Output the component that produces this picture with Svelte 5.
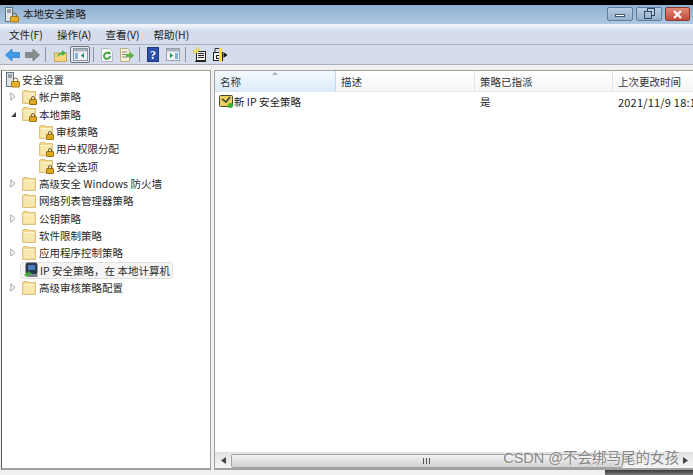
<script lang="ts">
	type Node = { label: string; depth: number; arrow?: 'closed' | 'open'; icon: string; selected?: boolean };

	const tree: Node[] = [
		{ label: '帐户策略', depth: 1, arrow: 'closed', icon: 'lock' },
		{ label: '本地策略', depth: 1, arrow: 'open', icon: 'lock' },
		{ label: '审核策略', depth: 2, icon: 'lock' },
		{ label: '用户权限分配', depth: 2, icon: 'lock' },
		{ label: '安全选项', depth: 2, icon: 'lock' },
		{ label: '高级安全 Windows 防火墙', depth: 1, arrow: 'closed', icon: 'folder' },
		{ label: '网络列表管理器策略', depth: 1, icon: 'folder' },
		{ label: '公钥策略', depth: 1, arrow: 'closed', icon: 'folder' },
		{ label: '软件限制策略', depth: 1, icon: 'folder' },
		{ label: '应用程序控制策略', depth: 1, arrow: 'closed', icon: 'folder' },
		{ label: 'IP 安全策略，在 本地计算机', depth: 1, icon: 'ip', selected: true },
		{ label: '高级审核策略配置', depth: 1, arrow: 'closed', icon: 'folder' }
	];

	const menus = ['文件(F)', '操作(A)', '查看(V)', '帮助(H)'];
</script>

{#snippet server()}
	<svg width="16" height="16" viewBox="0 0 16 16">
		<rect x="1.500" y="0.500" width="7" height="14" fill="#dfe3e8" stroke="#66727f" />
		<path d="M3 3h4M3 5h4" stroke="#4c5a6a" />
		<rect x="6.500" y="9.500" width="8" height="5.500" rx="0.500" fill="#e5b030" stroke="#a87a12" />
		<path d="M8.500 9.500V8a2 2 0 0 1 4 0v1.500" fill="none" stroke="#7a6a40" />
	</svg>
{/snippet}

{#snippet folder(lock: boolean)}
	<svg width="16" height="16" viewBox="0 0 16 16">
		<path d="M.5 3v11.500h13V2.500H7L6 1.500H1.500z" fill="#f3d88c" stroke="#dcc27e" />
		<path d="M1.500 4.500h11v9h-11z" fill="#f9e8ae" />
		<path d="M1.500 4.500h11" stroke="#fff6d8" />
		{#if lock}
			<rect x="7.500" y="10.500" width="7" height="5" rx="0.500" fill="#e0a820" stroke="#9c7210" />
			<path d="M9.500 10.500V9a1.500 1.500 0 0 1 3 0v1.500" fill="none" stroke="#6f6240" />
		{/if}
	</svg>
{/snippet}

{#snippet ipIcon()}
	<svg width="16" height="16" viewBox="0 0 16 16">
		<rect x="3" y="1" width="11" height="11" rx="1.500" fill="#26364c" stroke="#3a434f" />
		<rect x="5" y="3" width="7" height="5" fill="#4f7cc0" />
		<rect x="4.500" y="12" width="10" height="3" fill="#7f858c" />
		<path d="M1 13l4-3 1 1.500-2 3.500z" fill="#35b52e" />
		<path d="M5 9.500l4 3" stroke="#35b52e" stroke-width="1.500" />
	</svg>
{/snippet}

<div class="window">
	<header class="titlebar">
		<span class="title-icon">{@render server()}</span>
		<span class="title">本地安全策略</span>
		<div class="caption">
			<button class="cap" aria-label="最小化"><i class="min"></i></button>
			<button class="cap" aria-label="还原"><i class="restore"></i></button>
			<button class="cap close" aria-label="关闭">
				<svg width="11" height="9" viewBox="0 0 11 9"><path d="M2 1l7 7M9 1L2 8" stroke="#fff" stroke-width="2.200" /></svg>
			</button>
		</div>
	</header>

	<nav class="menubar">
		{#each menus as m}
			<span>{m}</span>
		{/each}
	</nav>

	<div class="toolbar">
		<svg class="back" width="15" height="14" viewBox="0 0 15 14">
			<path d="M.5 7L7 1v3.500h7.500v5H7V13z" fill="#3c9ae6" stroke="#2b78c2" stroke-width="0.700" />
		</svg>
		<svg class="forward" width="15" height="14" viewBox="0 0 15 14">
			<path d="M14.500 7L8 1v3.500H.5v5H8V13z" fill="#8a8d8d" stroke="#6f7272" stroke-width="0.700" />
		</svg>
		<i class="sep"></i>
		<svg class="up" width="13" height="14" viewBox="0 0 13 14">
			<path d="M.5 5h12v8.500H.5z" fill="#f4d67e" stroke="#c9a550" />
			<path d="M3 9.500c1-4 3-5 5-5V2l4 3-4 3V6.500c-2 0-3 1-5 3z" fill="#3fb04a" />
		</svg>
		<span class="pressed">
			<svg width="15" height="13" viewBox="0 0 15 13">
				<rect x="0.500" y="0.500" width="14" height="12" fill="#eef1f5" stroke="#8e959e" />
				<rect x="1" y="1" width="13" height="2.500" fill="#a9b3bf" />
				<rect x="2" y="5" width="3" height="6" fill="#7fb5dd" />
				<path d="M11 5v5L8 7.500z" fill="#1e8a4e" />
			</svg>
		</span>
		<i class="sep near"></i>
		<svg class="tool" width="12" height="14" viewBox="0 0 12 14">
			<path d="M.5.5h8l3 3v10H.5z" fill="#f5f7f8" stroke="#b5bcc0" />
			<path d="M9 8a3 3 0 1 1-1-2.300" fill="none" stroke="#3aa13c" stroke-width="1.800" />
			<path d="M6.500 3.500l3 .5-.5 3z" fill="#3aa13c" />
		</svg>
		<svg class="tool" width="14" height="14" viewBox="0 0 14 14">
			<path d="M.5.5h7l2 2v11H.5z" fill="#f6f0d8" stroke="#b9ad88" />
			<path d="M2 4h5M2 6.500h5M2 9h5" stroke="#8f8a78" />
			<path d="M6 6h3.500V3.500L14 7.500l-4.500 4V9H6z" fill="#59b548" />
		</svg>
		<i class="sep"></i>
		<svg class="tool" width="12" height="15" viewBox="0 0 12 15">
			<rect x="0.500" y="0.500" width="11" height="14" fill="#2c50a8" stroke="#1d3a80" />
			<text x="6" y="12" text-anchor="middle" class="help">?</text>
		</svg>
		<svg class="tool" width="14" height="13" viewBox="0 0 14 13">
			<rect x="0.500" y="0.500" width="13" height="12" fill="#eef1f5" stroke="#9aa1a8" />
			<rect x="1" y="1" width="12" height="2.500" fill="#a9b3bf" />
			<path d="M4 5v5l3-2.500z" fill="#1e8a4e" />
			<rect x="9" y="5" width="3" height="6" fill="#7fb5dd" />
		</svg>
		<i class="sep"></i>
		<svg class="tool" width="14" height="16" viewBox="0 0 14 16">
			<rect x="3.500" y="4.500" width="9" height="9" fill="#f7f7f2" stroke="#222" />
			<path d="M5 6.500h6M5 8.500h6M5 10.500h6M2 14.500h11" stroke="#222" />
			<path d="M3 0l2 5M0 3l5 2M7 1L4 5M0 6l4-1" stroke="#e8d540" stroke-width="1.300" />
		</svg>
		<svg class="last" width="15" height="15" viewBox="0 0 15 15">
			<rect x="0.500" y="5.500" width="9" height="8" fill="#f4f4f0" stroke="#222" />
			<rect x="3.500" y="8.500" width="3" height="3" fill="none" stroke="#222" />
			<rect x="6" y="1" width="3" height="14" fill="#f1e22a" />
			<path d="M2 1.500h4M2 1.500v4" stroke="#333" />
			<path d="M10.500 5l4 3-4 3z" fill="#111" />
		</svg>
	</div>

	<div class="body">
		<aside class="pane left">
			<div class="row root">
				<span class="ico">{@render server()}</span>
				<span class="label">安全设置</span>
			</div>
			{#each tree as node}
				<div class="row" class:indent={node.depth === 2}>
					<span class="arrow">
						{#if node.arrow === 'closed'}
							<svg width="6" height="9" viewBox="0 0 6 9"><path d="M.8.8v7.400L5 4.500z" fill="#fff" stroke="#a6a6a6" /></svg>
						{:else if node.arrow === 'open'}
							<svg width="7" height="7" viewBox="0 0 7 7"><path d="M6 1v5H1z" fill="#404040" /></svg>
						{/if}
					</span>
					<span class="item" class:selected={node.selected}>
						<span class="ico">
							{#if node.icon === 'ip'}
								{@render ipIcon()}
							{:else}
								{@render folder(node.icon === 'lock')}
							{/if}
						</span>
						<span class="label">{node.label}</span>
					</span>
				</div>
			{/each}
		</aside>

		<section class="pane right">
			<div class="thead">
				<div class="th name"><i class="sort"></i>名称</div>
				<div class="th desc">描述</div>
				<div class="th assign">策略已指派</div>
				<div class="th time">上次更改时间</div>
			</div>
			<div class="trow">
				<div class="td name">
					<svg width="15" height="15" viewBox="0 0 15 15">
						<rect x="0.500" y="1.500" width="13" height="11" rx="1" fill="#e8d060" stroke="#4c4a20" />
						<path d="M3 5l4 3 4-5" fill="none" stroke="#333" stroke-width="1.500" />
						<circle cx="11.500" cy="11.500" r="2.500" fill="#37b52e" />
					</svg>
					<span>新 IP 安全策略</span>
				</div>
				<div class="td desc"></div>
				<div class="td assign">是</div>
				<div class="td time stamp">2021/11/9 18:18:01</div>
			</div>
			<div class="spacer"></div>
			<div class="hscroll">
				<span class="sb-arrow">
					<svg width="5" height="7" viewBox="0 0 5 7"><path d="M5 0v7L0 3.500z" fill="#444" /></svg>
				</span>
				<div class="thumb"><i></i></div>
				<span class="sb-arrow end">
					<svg width="5" height="7" viewBox="0 0 5 7"><path d="M0 0v7l5-3.500z" fill="#444" /></svg>
				</span>
			</div>
		</section>
	</div>
	<footer class="status"></footer>
	<div class="peek"></div>
	<div class="mark">CSDN @不会绑马尾的女孩</div>
</div>

<style>
	:global(body) {
		margin: 0;
		background: #fff;
	}

	.window {
		position: relative;
		width: 693px;
		height: 475px;
		overflow: hidden;
		display: flex;
		flex-direction: column;
		border-top: 5px solid #000;
		box-sizing: border-box;
		font-family: 'Noto Sans CJK SC', 'Liberation Sans', sans-serif;
		font-size: 10.500px;
		color: #222;
		background: #f0f0f0;
	}

	.titlebar {
		height: 19px;
		flex: none;
		display: flex;
		align-items: center;
		padding-left: 4px;
		background: linear-gradient(180deg, #8fb0d0, #aec8e0);
	}

	.title-icon {
		display: flex;
		width: 19px;
	}

	.title {
		color: #1c1c1c;
		margin-top: -2px;
	}

	.caption {
		margin-left: auto;
		display: flex;
		gap: 3px;
		padding-right: 3px;
		align-self: flex-start;
		margin-top: 2px;
	}

	.cap {
		width: 26px;
		height: 14px;
		padding: 0;
		border: 1px solid #5f7d9c;
		border-radius: 2px;
		background: linear-gradient(180deg, #b8cfe5, #93b0cd);
		display: flex;
		align-items: center;
		justify-content: center;
	}

	.cap.close {
		width: 25px;
		background: linear-gradient(180deg, #e28a78, #c04a38);
		border-color: #8c3a30;
	}

	.min {
		width: 8px;
		height: 1px;
		margin-top: 3px;
		background: #fff;
		border: 1px solid #44566c;
	}

	.restore {
		width: 6px;
		height: 6px;
		margin: 2px 2px 0 0;
		border: 1px solid #34465c;
		box-shadow: 3px -3px 0 -1px #b8cfe5, 3px -3px 0 0 #34465c;
	}

	.menubar {
		height: 21px;
		flex: none;
		display: flex;
		align-items: center;
		padding-left: 9px;
		gap: 14px;
		background: linear-gradient(180deg, #eff3f9 0 2px, #d5dceb 6px);
		border-bottom: 1px solid #a9b0bd;
		box-sizing: border-box;
	}

	.toolbar {
		height: 20px;
		flex: none;
		display: flex;
		align-items: center;
		padding-left: 5px;
		background: #d5dcec;
		border-bottom: 1px solid #a9b0bd;
		box-sizing: border-box;
	}

	.toolbar svg {
		flex: none;
	}

	.forward {
		margin-left: 5px;
	}

	.up {
		margin-left: 8px;
	}

	.tool {
		margin-left: 7px;
	}

	.last {
		margin-left: 6px;
	}

	.sep {
		width: 1px;
		height: 15px;
		background: #8c95a4;
		margin-left: 5px;
		flex: none;
	}

	.sep.near {
		margin-left: 3px;
	}

	.pressed {
		display: flex;
		align-items: center;
		justify-content: center;
		width: 20px;
		height: 17px;
		margin-left: 3px;
		box-sizing: border-box;
		border: 1px solid #6a727c;
		border-radius: 2px;
		background: #e2e7f0;
	}

	.help {
		font: bold 12px 'Liberation Serif', serif;
		fill: #fff;
	}

	.body {
		flex: 1;
		min-height: 0;
		display: flex;
		gap: 3px;
		padding: 5px 0 0 1px;
	}

	.pane {
		background: #fff;
		border: 1px solid #a0a0a0;
		box-sizing: border-box;
	}

	.left {
		width: 210px;
		flex: none;
		border-bottom-width: 2px;
		border-left: 1px solid #555;
		margin-bottom: 1px;
	}

	.right {
		flex: 1;
		min-width: 0;
		display: flex;
		flex-direction: column;
		border-right: none;
		border-bottom-width: 2px;
		margin-bottom: 1px;
	}

	.row {
		height: 17.330px;
		display: flex;
		align-items: center;
		padding-left: 8px;
		white-space: nowrap;
	}

	.row.root {
		padding-left: 3px;
	}

	.row.indent {
		padding-left: 25px;
	}

	.arrow {
		width: 12px;
		display: flex;
		align-items: center;
		flex: none;
	}

	.item {
		display: flex;
		align-items: center;
	}

	.item.selected {
		height: 17px;
		margin-left: -2px;
		padding: 0 2px;
		box-sizing: border-box;
		background: #f5f5f5;
		border: 1px solid #e0e0e0;
		border-radius: 3px;
	}

	.ico {
		width: 17px;
		flex: none;
		display: flex;
		align-items: center;
	}

	.label {
		color: #2a2a2a;
	}

	.thead {
		display: flex;
		height: 21px;
		flex: none;
		border-bottom: 1px solid #e4e8ec;
		box-sizing: border-box;
		background: linear-gradient(180deg, #fff, #f5f6f8);
	}

	.th {
		position: relative;
		padding: 3px 0 0 5px;
		border-right: 1px solid #e3e5e8;
		box-sizing: border-box;
		color: #333;
	}

	.th.name {
		background: linear-gradient(180deg, #f4fafe, #dcecf8);
		border-right-color: #bcdcf1;
	}

	.sort {
		position: absolute;
		left: 57px;
		top: 1px;
		border: 3px solid transparent;
		border-top: 0;
		border-bottom: 3px solid #a8b4c4;
	}

	.name {
		width: 121px;
		flex: none;
	}

	.desc {
		width: 139px;
		flex: none;
	}

	.assign {
		width: 138px;
		flex: none;
	}

	.time {
		flex: 1;
		border-right: none;
		white-space: nowrap;
	}

	.stamp {
		font-size: 11px;
		letter-spacing: 0.200px;
	}

	.trow {
		display: flex;
		height: 19px;
		align-items: center;
	}

	.td {
		padding-left: 5px;
		box-sizing: border-box;
	}

	.td.name {
		display: flex;
		align-items: center;
		padding-left: 4px;
	}

	.spacer {
		flex: 1;
	}

	.hscroll {
		height: 15px;
		flex: none;
		display: flex;
		align-items: center;
		background: linear-gradient(180deg, #e4e4e4, #f4f4f4);
		border-top: 1px solid #e0e0e0;
	}

	.sb-arrow {
		width: 16px;
		flex: none;
		display: flex;
		justify-content: center;
	}

	.thumb {
		width: 392px;
		height: 14px;
		border: 1px solid #a4a4a4;
		border-radius: 2px;
		box-sizing: border-box;
		background: linear-gradient(180deg, #f2f2f2, #d2d2d2);
		display: flex;
		align-items: center;
		justify-content: center;
	}

	.thumb i {
		width: 8px;
		height: 6px;
		background: repeating-linear-gradient(90deg, #555 0 1px, transparent 1px 3px);
	}

	.end {
		margin-left: auto;
	}

	.status {
		height: 4px;
		flex: none;
		background: #f0f0f0;
	}

	.peek {
		position: absolute;
		right: 0;
		bottom: 0;
		width: 88px;
		height: 5px;
		background: linear-gradient(180deg, #3a3a3a, #7c7c7c);
	}

	.mark {
		position: absolute;
		right: 14px;
		bottom: 9px;
		font-size: 14.500px;
		line-height: 16px;
		color: #858585;
		white-space: nowrap;
		font-family: 'Liberation Sans', 'Noto Sans CJK SC', sans-serif;
		text-shadow: 0 0 2px #fff;
	}
</style>
